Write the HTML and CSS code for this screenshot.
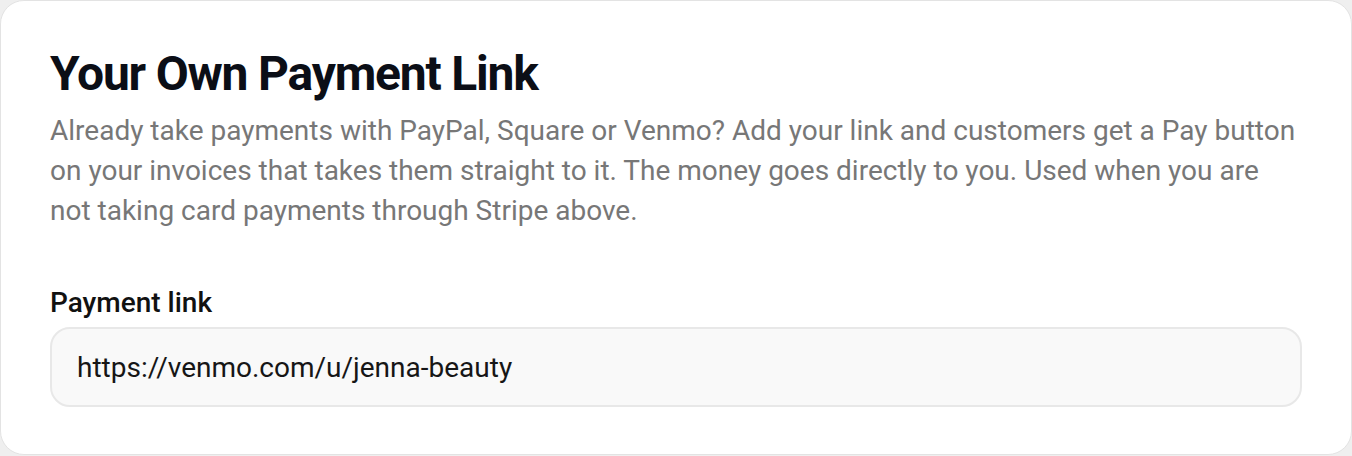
FILE: index.html
```html
<!DOCTYPE html>
<html lang="en">
<head>
    <meta charset="UTF-8">
    <meta name="viewport" content="width=device-width, initial-scale=1.0">
    <title>Payment Link</title>
    <link rel="stylesheet" href="styles.css">
</head>
<body>
    <div class="card">
        <h1>Your Own Payment Link</h1>
        <p class="desc">Already take payments with PayPal, Square or Venmo? Add your link and customers get a Pay button on your invoices that takes them straight to it. The money goes directly to you. Used when you are not taking card payments through Stripe above.</p>

        <div class="field">
            <label for="payLink">Payment link</label>
            <input id="payLink" type="text" value="https://venmo.com/u/jenna-beauty">
        </div>
    </div>
</body>
</html>
```

FILE: styles.css
```css
body {
    font-family: Roboto, "Liberation Sans", sans-serif;
    margin: 0;
    background: #efefef;
}
.card {
    background: #fff;
    border: 1px solid #e3e3e3;
    border-radius: 24px;
    height: 455px;
    box-sizing: border-box;
    padding: 45px 49px 49px 49px;
}
h1 {
    margin: 0;
    font-size: 48px;
    line-height: 56px;
    font-weight: 700;
    color: #0b0e16;
    letter-spacing: -1.2px;
}
.desc {
    margin: 9px 0 0;
    font-size: 28px;
    line-height: 40px;
    color: #777;
}
.field {
    margin-top: 55px;
}
.field label {
    display: block;
    font-size: 28px;
    line-height: 34px;
    font-weight: 500;
    color: #111;
}
.field input {
    display: block;
    width: 100%;
    box-sizing: border-box;
    margin-top: 7px;
    height: 80px;
    padding: 0 25px;
    font-family: inherit;
    font-size: 28px;
    color: #161616;
    background: #f9f9f9;
    border: 2px solid #e8e8e8;
    border-radius: 20px;
    outline: none;
}
```
